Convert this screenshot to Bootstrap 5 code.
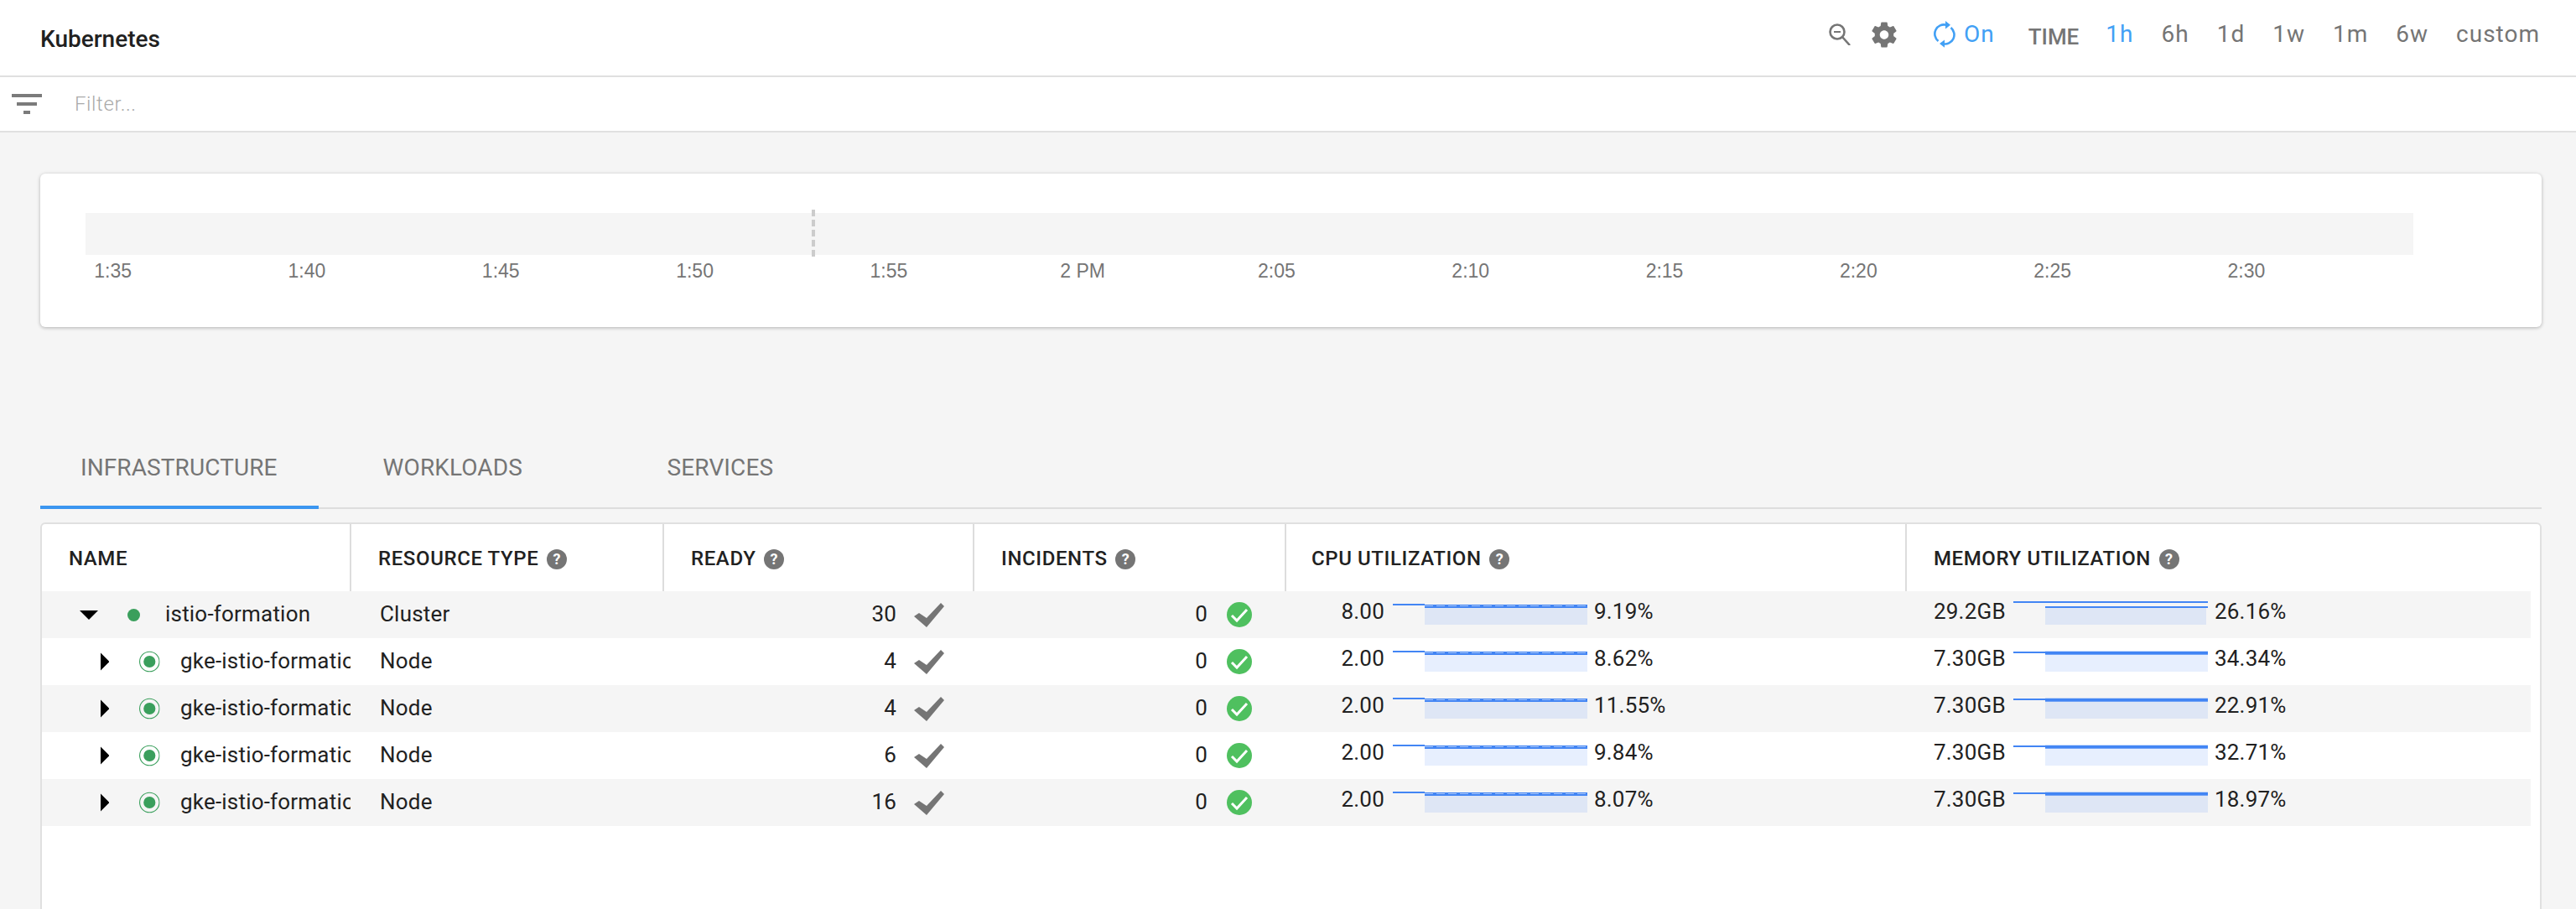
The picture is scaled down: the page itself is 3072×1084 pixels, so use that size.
<!DOCTYPE html>
<html lang="en">
<head>
<meta charset="UTF-8">
<title>Kubernetes</title>
<link href="https://cdn.jsdelivr.net/npm/bootstrap@5.3.0/dist/css/bootstrap.min.css" rel="stylesheet">
<style>
    html, body { height: 100%; }
    body { background: #f5f5f5; font-family: Roboto, sans-serif; color: #212121; overflow: hidden; }
    .top-bar { height: 92px; background: #fff; border-bottom: 2px solid #e0e0e0; padding: 0 43px 0 48px; }
    .page-title { font-size: 28px; font-weight: 500; line-height: 1; padding-top: 3px; }
    .bar-actions { color: #757575; font-size: 28px; font-weight: 400; letter-spacing: 1px; line-height: 1; margin-bottom: 8px; }
    .bar-actions .is-on { color: #42a0f5; }
    .ico-search { margin-right: 25px; }
    .ico-sync { margin-left: 44px; margin-right: 10px; }
    .time-label { font-size: 26px; font-weight: 500; letter-spacing: 0; padding-top: 5px; margin-left: 40px; margin-right: 32px; }
    .range-item { margin-right: 33px; }
    .range-item:last-child { margin-right: 0; }
    .filter-bar { height: 66px; background: #fff; border-bottom: 2px solid #e0e0e0; padding-left: 14px; }
    .filter-text { color: #aaa; font-size: 24px; font-weight: 300; margin-left: 39px; letter-spacing: .6px; }
    .page-body { padding: 49px 41px 0 48px; }
    .chart-card { height: 183px; background: #fff; border-radius: 6px; box-shadow: 0 1px 4px rgba(0,0,0,.28); padding: 47px 0 0 54px; }
    .chart-strip { width: 2776px; height: 50px; background: #f5f5f5; position: relative; }
    .now-line { position: absolute; left: 866px; top: -4px; height: 56px; border-left: 4px dashed #ccc; }
    .chart-axis { margin-left: -83px; font-family: "Liberation Sans", sans-serif; font-size: 23px; color: #757575; padding-top: 2px; }
    .chart-axis span { width: 231.3px; text-align: center; flex: none; }
    .tab-row { margin-top: 155px; border-bottom: 2px solid #ddd; height: 62px; }
    .tab-row a { display: block; padding: 0 48px; height: 60px; line-height: 26px; color: #757575; font-size: 28px; font-weight: 400; text-decoration: none; letter-spacing: .1px; }
    .tab-row a.current { border-bottom: 4px solid #3b96f0; height: 62px; padding-right: 49px; }
    .tab-row a.second { margin-left: 29px; width: 339px; }
    .table-card { margin-top: 16px; background: #fff; border: 2px solid #e0e0e0; border-bottom: 0; border-radius: 6px 6px 0 0; min-height: 600px; }
    .pod-table { table-layout: fixed; width: 2968px; border-collapse: collapse; }
    .pod-table th { height: 80px; padding: 2px 0 0 32px; font-size: 24px; font-weight: 500; letter-spacing: .6px; border-left: 2px solid #ddd; vertical-align: middle; }
    .pod-table th:first-child { border-left: 0; }
    .pod-table th:nth-child(5) { padding-left: 30px; }
    .pod-table td { height: 56px; padding: 0; font-size: 26px; letter-spacing: .2px; vertical-align: middle; }
    .pod-table tbody tr:nth-child(odd) td { background: #f5f5f5; }
    .w-name { width: 368px; }
    .w-type { width: 373px; }
    .w-ready { width: 370px; }
    .w-inc { width: 372px; }
    .w-cpu { width: 740px; }
    .w-mem { width: 745px; }
    .help-dot { display: inline-block; width: 24px; height: 24px; line-height: 24px; border-radius: 50%; background: #757575; color: #fff; text-align: center; font-size: 18px; font-weight: 700; letter-spacing: 0; margin-left: 3px; vertical-align: 1px; }
    .name-cell { display: flex; align-items: center; height: 56px; overflow: hidden; white-space: nowrap; }
    .name-cell span { padding-bottom: 2px; }
    .arr-open { margin-left: 45px; }
    .dot-root { margin-left: 35px; }
    .name-root { margin-left: 30px; }
    .arr-shut { margin-left: 70px; }
    .dot-node { margin-left: 36px; }
    .name-node { margin-left: 24px; overflow: hidden; flex: none; width: 203px; }
    .type-cell { padding-left: 35px !important; padding-bottom: 2px !important; }
    .count-cell { display: flex; align-items: center; justify-content: flex-end; height: 56px; }
    .count-cell span { padding-bottom: 2px; }
    .ready-cell { padding-right: 35px; gap: 21px; }
    .incident-cell { padding-right: 40px; gap: 23px; }
    .util-cell { display: flex; align-items: flex-start; height: 56px; gap: 8px; }
    .util-cell span { padding-top: 5px; }
    .util-cell svg { flex: none; display: block; }
    .util-cell .cap { width: 120px; text-align: right; padding-right: 2px; }
    .util-cell .cap-mem { width: 120px; padding-left: 33px; white-space: nowrap; }
    .ln-thick { stroke: #4285f4; stroke-width: 4; fill: none; }
    .ln-thin { stroke: #4285f4; stroke-width: 2; fill: none; }
    .ln-dash { stroke: #a9c7f8; stroke-width: 1; stroke-dasharray: 10 4; fill: none; }
    .sp-area { fill: rgba(66,133,244,.13); }
</style>
</head>
<body>
<svg width="0" height="0" class="position-absolute">
    <symbol id="tick" viewBox="0 0 36 29"><polygon points="0,16 6,12 15,18 32,0 36,4 15,29" fill="#757575"/></symbol>
    <symbol id="okay" viewBox="0 0 30 30"><circle cx="15" cy="15" r="15" fill="#4fc05f"/><polyline points="6,16 12,22 24,9" fill="none" stroke="#fff" stroke-width="3"/></symbol>
    <symbol id="open" viewBox="0 0 22 11"><polygon points="0,0 22,0 11,11" fill="#000"/></symbol>
    <symbol id="shut" viewBox="0 0 11 22"><polygon points="0,0 11,11 0,22" fill="#000"/></symbol>
    <symbol id="ring" viewBox="0 0 26 26"><circle cx="13" cy="13" r="12.4" fill="none" stroke="#3a9f5c" stroke-width="1.2"/><circle cx="13" cy="13" r="7.5" fill="#3a9f5c"/></symbol>
    <symbol id="sp-cpu" viewBox="0 0 232 40"><rect class="sp-area" x="38" y="20" width="194" height="20"/><path class="ln-thin" d="M0 16H38"/><path class="ln-thick" d="M38 18H232"/><path class="ln-dash" d="M38 17.5H232"/></symbol>
    <symbol id="sp-mem" viewBox="0 0 232 40"><rect class="sp-area" x="38" y="20" width="194" height="20"/><path class="ln-thin" d="M0 17H38"/><path class="ln-thick" d="M38 17.8H232"/></symbol>
    <symbol id="sp-top" viewBox="0 0 232 40"><rect class="sp-area" x="38" y="20" width="192" height="20"/><path class="ln-thin" d="M0 13H232"/><path class="ln-thin" d="M38 19H232"/></symbol>
</svg>

<header class="top-bar d-flex align-items-center justify-content-between">
    <div class="page-title">Kubernetes</div>
    <div class="bar-actions d-flex align-items-center">
        <svg width="26" height="26" viewBox="0 0 26 26" class="ico-search" fill="none" stroke="#757575" stroke-width="2.6"><circle cx="10" cy="10" r="8.5"/><path d="M16 16l9 10"/><path d="M6 10h8" stroke-width="2"/></svg>
        <svg width="30" height="31" viewBox="2 2 20 20" fill="#757575"><path d="M19.43 12.98c.04-.32.07-.64.07-.98s-.03-.66-.07-.98l2.11-1.65c.19-.15.24-.42.12-.64l-2-3.46c-.12-.22-.39-.3-.61-.22l-2.49 1c-.52-.4-1.08-.73-1.69-.98l-.38-2.65C14.46 2.18 14.25 2 14 2h-4c-.25 0-.46.18-.49.42l-.38 2.65c-.61.25-1.17.59-1.69.98l-2.49-1c-.23-.09-.49 0-.61.22l-2 3.46c-.13.22-.07.49.12.64l2.11 1.65c-.04.32-.07.65-.07.98s.03.66.07.98l-2.11 1.65c-.19.15-.24.42-.12.64l2 3.46c.12.22.39.3.61.22l2.49-1c.52.4 1.08.73 1.69.98l.38 2.65c.03.24.24.42.49.42h4c.25 0 .46-.18.49-.42l.38-2.65c.61-.25 1.17-.59 1.69-.98l2.49 1c.23.09.49 0 .61-.22l2-3.46c.12-.22.07-.49-.12-.64l-2.11-1.65zM12 15.5c-1.93 0-3.5-1.57-3.5-3.5s1.57-3.5 3.5-3.5 3.5 1.57 3.5 3.5-1.57 3.5-3.5 3.5z"/></svg>
        <svg width="26" height="32" viewBox="0 0 26 32" class="ico-sync" fill="none" stroke="#42a0f5" stroke-width="2.6"><path d="M15 4.7A11 11 0 0 0 5.5 24"/><path d="M11 27.2A11 11 0 0 0 20.5 8"/><path d="M14 0v9.4l6-4.7zM13 22.4v9.4l-6-4.7z" fill="#42a0f5" stroke="none"/></svg>
        <span class="is-on">On</span>
        <span class="time-label">TIME</span>
        <span class="range-item is-on">1h</span><span class="range-item">6h</span><span class="range-item">1d</span><span class="range-item">1w</span><span class="range-item">1m</span><span class="range-item">6w</span><span class="range-item">custom</span>
    </div>
</header>
<div class="filter-bar d-flex align-items-center">
    <svg width="36" height="24" viewBox="0 0 36 24" fill="#7b7b7b"><rect width="36" height="4"/><rect x="6" y="10" width="24" height="4"/><rect x="14" y="20" width="8" height="4"/></svg>
    <span class="filter-text">Filter...</span>
</div>

<main class="page-body">
    <div class="chart-card">
        <div class="chart-strip"><div class="now-line"></div></div>
        <div class="chart-axis d-flex">
            <span>1:35</span><span>1:40</span><span>1:45</span><span>1:50</span><span>1:55</span><span>2 PM</span><span>2:05</span><span>2:10</span><span>2:15</span><span>2:20</span><span>2:25</span><span>2:30</span>
        </div>
    </div>

    <nav class="tab-row d-flex">
        <a href="#" class="current">INFRASTRUCTURE</a>
        <a href="#" class="second">WORKLOADS</a>
        <a href="#">SERVICES</a>
    </nav>

    <div class="table-card">
        <table class="pod-table">
            <colgroup><col class="w-name"><col class="w-type"><col class="w-ready"><col class="w-inc"><col class="w-cpu"><col class="w-mem"></colgroup>
            <thead>
                <tr>
                    <th>NAME</th>
                    <th>RESOURCE TYPE <span class="help-dot">?</span></th>
                    <th>READY <span class="help-dot">?</span></th>
                    <th>INCIDENTS <span class="help-dot">?</span></th>
                    <th>CPU UTILIZATION <span class="help-dot">?</span></th>
                    <th>MEMORY UTILIZATION <span class="help-dot">?</span></th>
                </tr>
            </thead>
            <tbody>
                <tr>
                    <td><div class="name-cell"><svg width="22" height="11" class="arr-open"><use href="#open"/></svg><svg width="15" height="15" class="dot-root"><circle cx="7.5" cy="7.5" r="7.5" fill="#3a9f5c"/></svg><span class="name-root">istio-formation</span></div></td>
                    <td class="type-cell">Cluster</td>
                    <td><div class="count-cell ready-cell"><span>30</span><svg width="36" height="29"><use href="#tick"/></svg></div></td>
                    <td><div class="count-cell incident-cell"><span>0</span><svg width="30" height="30"><use href="#okay"/></svg></div></td>
                    <td><div class="util-cell"><span class="cap">8.00</span><svg width="232" height="40"><use href="#sp-cpu"/></svg><span>9.19%</span></div></td>
                    <td><div class="util-cell"><span class="cap-mem">29.2GB</span><svg width="232" height="40"><use href="#sp-top"/></svg><span>26.16%</span></div></td>
                </tr>
                <tr>
                    <td><div class="name-cell"><svg width="11" height="22" class="arr-shut"><use href="#shut"/></svg><svg width="26" height="26" class="dot-node"><use href="#ring"/></svg><span class="name-node">gke-istio-formation</span></div></td>
                    <td class="type-cell">Node</td>
                    <td><div class="count-cell ready-cell"><span>4</span><svg width="36" height="29"><use href="#tick"/></svg></div></td>
                    <td><div class="count-cell incident-cell"><span>0</span><svg width="30" height="30"><use href="#okay"/></svg></div></td>
                    <td><div class="util-cell"><span class="cap">2.00</span><svg width="232" height="40"><use href="#sp-cpu"/></svg><span>8.62%</span></div></td>
                    <td><div class="util-cell"><span class="cap-mem">7.30GB</span><svg width="232" height="40"><use href="#sp-mem"/></svg><span>34.34%</span></div></td>
                </tr>
                <tr>
                    <td><div class="name-cell"><svg width="11" height="22" class="arr-shut"><use href="#shut"/></svg><svg width="26" height="26" class="dot-node"><use href="#ring"/></svg><span class="name-node">gke-istio-formation</span></div></td>
                    <td class="type-cell">Node</td>
                    <td><div class="count-cell ready-cell"><span>4</span><svg width="36" height="29"><use href="#tick"/></svg></div></td>
                    <td><div class="count-cell incident-cell"><span>0</span><svg width="30" height="30"><use href="#okay"/></svg></div></td>
                    <td><div class="util-cell"><span class="cap">2.00</span><svg width="232" height="40"><use href="#sp-cpu"/></svg><span>11.55%</span></div></td>
                    <td><div class="util-cell"><span class="cap-mem">7.30GB</span><svg width="232" height="40"><use href="#sp-mem"/></svg><span>22.91%</span></div></td>
                </tr>
                <tr>
                    <td><div class="name-cell"><svg width="11" height="22" class="arr-shut"><use href="#shut"/></svg><svg width="26" height="26" class="dot-node"><use href="#ring"/></svg><span class="name-node">gke-istio-formation</span></div></td>
                    <td class="type-cell">Node</td>
                    <td><div class="count-cell ready-cell"><span>6</span><svg width="36" height="29"><use href="#tick"/></svg></div></td>
                    <td><div class="count-cell incident-cell"><span>0</span><svg width="30" height="30"><use href="#okay"/></svg></div></td>
                    <td><div class="util-cell"><span class="cap">2.00</span><svg width="232" height="40"><use href="#sp-cpu"/></svg><span>9.84%</span></div></td>
                    <td><div class="util-cell"><span class="cap-mem">7.30GB</span><svg width="232" height="40"><use href="#sp-mem"/></svg><span>32.71%</span></div></td>
                </tr>
                <tr>
                    <td><div class="name-cell"><svg width="11" height="22" class="arr-shut"><use href="#shut"/></svg><svg width="26" height="26" class="dot-node"><use href="#ring"/></svg><span class="name-node">gke-istio-formation</span></div></td>
                    <td class="type-cell">Node</td>
                    <td><div class="count-cell ready-cell"><span>16</span><svg width="36" height="29"><use href="#tick"/></svg></div></td>
                    <td><div class="count-cell incident-cell"><span>0</span><svg width="30" height="30"><use href="#okay"/></svg></div></td>
                    <td><div class="util-cell"><span class="cap">2.00</span><svg width="232" height="40"><use href="#sp-cpu"/></svg><span>8.07%</span></div></td>
                    <td><div class="util-cell"><span class="cap-mem">7.30GB</span><svg width="232" height="40"><use href="#sp-mem"/></svg><span>18.97%</span></div></td>
                </tr>
            </tbody>
        </table>
    </div>
</main>
<script src="https://cdn.jsdelivr.net/npm/bootstrap@5.3.0/dist/js/bootstrap.bundle.min.js"></script>
</body>
</html>
